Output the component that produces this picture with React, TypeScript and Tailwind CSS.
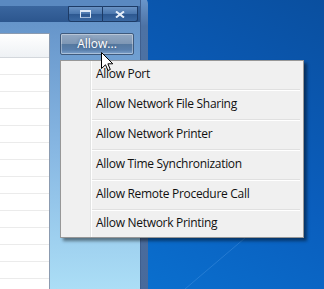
import React from 'react';

const menuItems = [
  'Allow Port',
  'Allow Network File Sharing',
  'Allow Network Printer',
  'Allow Time Synchronization',
  'Allow Remote Procedure Call',
  'Allow Network Printing',
];

const rows = Array.from({ length: 14 });

export default function App() {
  return (
    <div
      className="relative w-[324px] h-[289px] overflow-hidden bg-[linear-gradient(210deg,#0a4f9f_0%,#0a5ebd_45%,#0a77d6_100%)]"
      style={{ fontFamily: '"Open Sans", "Noto Sans", sans-serif' }}
    >
      {/* faint streak on the desktop */}
      <svg className="absolute left-0 top-0" width="324" height="289">
        <line x1="185" y1="289" x2="245" y2="238" stroke="#5aa0e8" strokeOpacity="0.35" strokeWidth="1" />
      </svg>

      {/* Window */}
      <div className="absolute left-0 top-[-4px] w-[148px] h-[300px] flex rounded-tr-[8px] overflow-hidden">
        <div className="flex-1 flex flex-col bg-[linear-gradient(180deg,#5d8cc4_0px,#6a99cd_40px,#86b6e2_150px,#ade0f7_300px)]">
          {/* title bar */}
          <div className="h-[12px] bg-[#5a89c1]" />
          <div className="h-[18px] flex items-stretch justify-end bg-[linear-gradient(180deg,#3a669f,#2c568e)] pr-[2px]">
            <div className="w-[35px] flex items-center justify-center border border-[#1d3b66] bg-[linear-gradient(180deg,#6a93c5_0%,#4a76ad_50%,#2d5890_51%,#3a68a2_100%)] rounded-bl-[3px]">
              <div className="w-[11px] h-[8px] border border-[#dde9f7] border-t-2 border-b-[#9fb8d8]" />
            </div>
            <div className="w-[35px] flex items-center justify-center border border-l-0 border-[#1d3b66] bg-[linear-gradient(180deg,#6a93c5_0%,#4a76ad_50%,#2d5890_51%,#3a68a2_100%)] rounded-br-[3px]">
              <svg width="10" height="7" viewBox="0 0 10 7">
                <path d="M1 0.5 L9 6.5 M9 0.5 L1 6.5" stroke="#e6effa" strokeWidth="2" />
              </svg>
            </div>
          </div>

          {/* body */}
          <div className="flex-1 flex pt-[11px]">
            <div className="w-[50px] flex flex-col bg-white border-t border-r border-[#8b9bb0]">
              <div className="h-[24px] bg-[linear-gradient(180deg,#ffffff,#eef1f4)] border-b border-[#d3d7dc]" />
              {rows.map((_, i) => (
                <div key={i} className="h-[17px] shrink-0 border-b border-[#ebebeb]" />
              ))}
            </div>
            <div className="flex-1 pl-[10px] pr-[6px]">
              <div className="h-[22px] flex items-center justify-center border border-[#3f5a7c] rounded-[2px] bg-[linear-gradient(180deg,#93a9c3_0%,#7e97b5_48%,#55789f_52%,#5a80ad_80%,#7fa3cc_100%)] shadow-[inset_0_0_0_1px_rgba(255,255,255,0.35)]">
                <span className="text-[12px] text-white leading-none pb-[1px] [text-shadow:0_0_3px_rgba(30,50,80,0.6)]">Allow...</span>
              </div>
            </div>
          </div>
        </div>
        <div className="w-[8px] bg-[linear-gradient(180deg,#6e9bd0_0px,#4d72a4_30px,#486a9b_100%)] border-l border-[#3f5f8f]" />
      </div>

      {/* Menu */}
      <div className="absolute left-[60px] top-[60px] w-[244px] flex flex-col bg-[#f0f0f0] border border-[#979797] shadow-[3px_3px_3px_rgba(0,0,0,0.45)] text-[12px] tracking-[-0.3px] text-[#111]">
        <div className="absolute left-[29px] top-0 bottom-0 w-[2px] border-l border-[#e2e3e3] bg-white" />
        {menuItems.map((label, i) => (
          <div key={label} className="flex flex-col">
            <div className={`${i === menuItems.length - 1 ? 'h-[26px]' : 'h-[28px]'} flex items-center pl-[35px]`}>
              <span className="leading-none pb-[2px]">{label}</span>
            </div>
            {i < menuItems.length - 1 && (
              <div className="h-[2px] ml-[31px] mr-[3px] border-t border-[#e0e0e0] bg-white" />
            )}
          </div>
        ))}
      </div>

      {/* Cursor */}
      <svg className="absolute left-[101px] top-[52px]" width="13" height="20" viewBox="0 0 13 20">
        <path d="M0.5 0.5 L0.5 16.5 L4.5 12.8 L7 18.5 L9.3 17.5 L6.9 11.8 L11.8 11.8 Z" fill="#fff" stroke="#000" strokeWidth="1" strokeLinejoin="miter" />
      </svg>
    </div>
  );
}
